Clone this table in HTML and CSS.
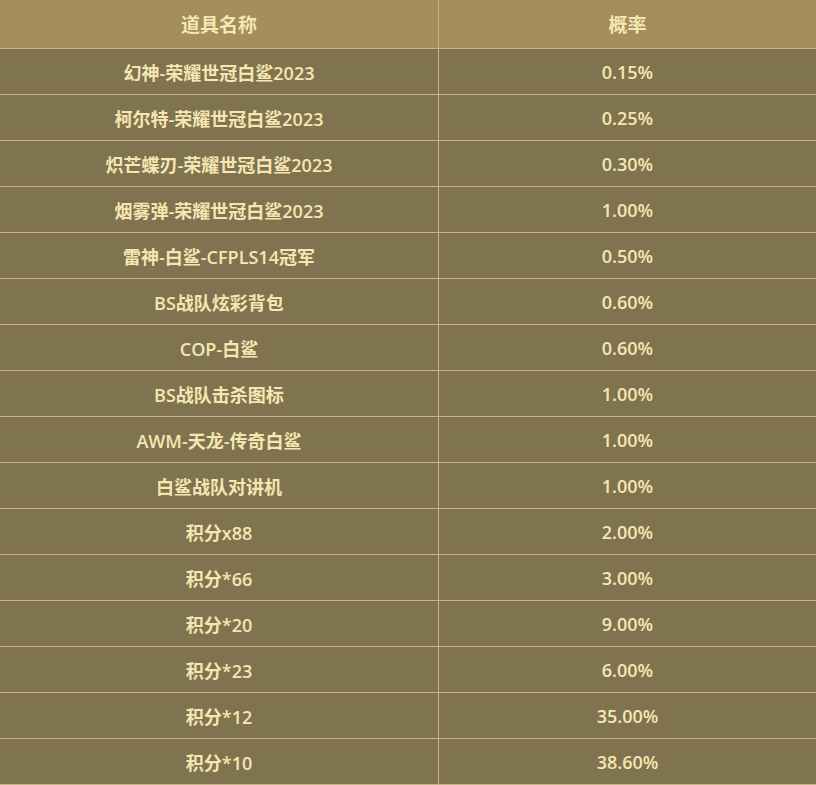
FILE: index.html
```html
<!DOCTYPE html>
<html lang="zh-CN">
<head>
<meta charset="utf-8">
<link rel="stylesheet" href="styles.css">
</head>
<body>
<table class="prob-table">
  <thead>
    <tr><th class="col-name">道具名称</th><th class="col-rate">概率</th></tr>
  </thead>
  <tbody>
    <tr><td>幻神-荣耀世冠白鲨2023</td><td>0.15%</td></tr>
    <tr><td>柯尔特-荣耀世冠白鲨2023</td><td>0.25%</td></tr>
    <tr><td>炽芒蝶刃-荣耀世冠白鲨2023</td><td>0.30%</td></tr>
    <tr><td>烟雾弹-荣耀世冠白鲨2023</td><td>1.00%</td></tr>
    <tr><td>雷神-白鲨-CFPLS14冠军</td><td>0.50%</td></tr>
    <tr><td>BS战队炫彩背包</td><td>0.60%</td></tr>
    <tr><td>COP-白鲨</td><td>0.60%</td></tr>
    <tr><td>BS战队击杀图标</td><td>1.00%</td></tr>
    <tr><td>AWM-天龙-传奇白鲨</td><td>1.00%</td></tr>
    <tr><td>白鲨战队对讲机</td><td>1.00%</td></tr>
    <tr><td>积分x88</td><td>2.00%</td></tr>
    <tr><td>积分*66</td><td>3.00%</td></tr>
    <tr><td>积分*20</td><td>9.00%</td></tr>
    <tr><td>积分*23</td><td>6.00%</td></tr>
    <tr><td>积分*12</td><td>35.00%</td></tr>
    <tr><td>积分*10</td><td>38.60%</td></tr>
  </tbody>
</table>
</body>
</html>
```
FILE: styles.css
```css
html, body {
  margin: 0;
  padding: 0;
  background: #ffffff;
}
.prob-table {
  width: 816px;
  border-collapse: collapse;
  table-layout: fixed;
  font-family: "Open Sans", "Noto Sans CJK SC", sans-serif;
  font-weight: 600;
  font-size: 18px;
  color: #f6e7b2;
}
.prob-table .col-name { width: 438px; }
.prob-table th {
  background: #a58d5c;
  height: 48px;
  padding: 0;
  text-align: center;
  font-size: 19px;
  font-weight: 600;
  border-left: 1px solid #c9b487;
  border-bottom: 1px solid #c9b487;
}
.prob-table th:first-child,
.prob-table td:first-child { border-left: none; }
.prob-table td {
  background: #807350;
  height: 45px;
  padding: 0;
  text-align: center;
  border-left: 1px solid #c9b487;
  border-bottom: 1px solid #c9b487;
}
```
